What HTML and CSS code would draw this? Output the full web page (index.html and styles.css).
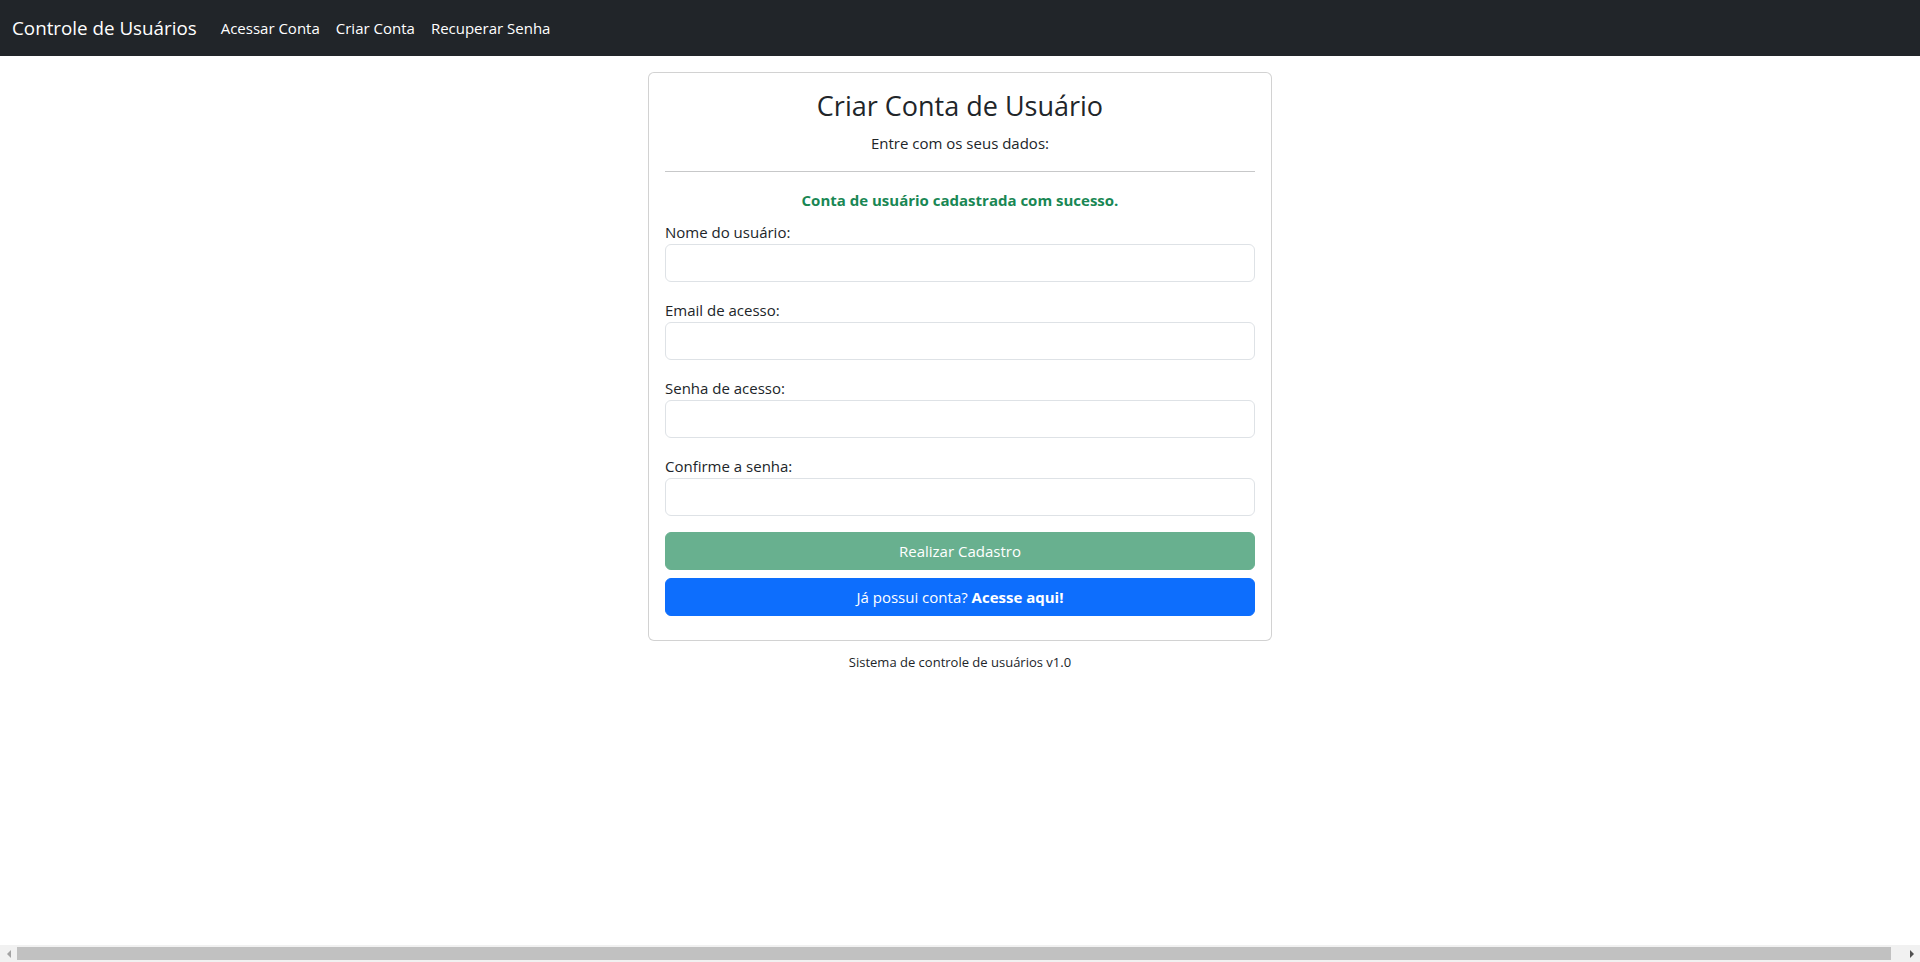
FILE: index.html
```html
<!DOCTYPE html>
<html lang="pt-br">
<head>
<meta charset="utf-8">
<title>Controle de Usuários</title>
<link rel="stylesheet" href="styles.css">
</head>
<body>
<nav class="navbar">
  <div class="navbar-inner">
    <a class="brand" href="#">Controle de Usuários</a>
    <ul class="nav-links">
      <li><a href="#">Acessar Conta</a></li>
      <li><a href="#">Criar Conta</a></li>
      <li><a href="#">Recuperar Senha</a></li>
    </ul>
  </div>
</nav>
<div class="row">
  <div class="col">
    <div class="card">
      <div class="card-body">
        <h3 class="title">Criar Conta de Usuário</h3>
        <p class="subtitle">Entre com os seus dados:</p>
        <hr class="divider">
        <p class="success">Conta de usuário cadastrada com sucesso.</p>
        <form class="form">
          <div class="field">
            <label for="nome">Nome do usuário:</label>
            <input id="nome" type="text" class="input">
          </div>
          <div class="field">
            <label for="email">Email de acesso:</label>
            <input id="email" type="email" class="input">
          </div>
          <div class="field">
            <label for="senha">Senha de acesso:</label>
            <input id="senha" type="password" class="input">
          </div>
          <div class="field">
            <label for="senha2">Confirme a senha:</label>
            <input id="senha2" type="password" class="input">
          </div>
          <div class="btn-wrap">
            <button type="button" class="btn btn-success" disabled>Realizar Cadastro</button>
          </div>
          <div class="btn-wrap">
            <a href="#" class="btn btn-primary">Já possui conta? <strong>Acesse aqui!</strong></a>
          </div>
        </form>
      </div>
    </div>
    <div class="footer"><small>Sistema de controle de usuários v1.0</small></div>
  </div>
</div>
<div class="hscroll" aria-hidden="true">
  <span class="hscroll-btn"><span class="arrow arrow-left"></span></span>
  <span class="hscroll-track"><span class="hscroll-thumb"></span></span>
  <span class="hscroll-btn"><span class="arrow arrow-right"></span></span>
</div>
</body>
</html>
```

FILE: styles.css
```css
* { box-sizing: border-box; }

html, body {
  margin: 0;
  padding: 0;
}

body {
  font-family: "Open Sans", "Noto Sans", sans-serif;
  font-size: 15px;
  line-height: 24px;
  color: #212529;
  background: #fff;
}

a { text-decoration: none; }

.navbar {
  background: #212529;
  padding: 8px 0;
}

.navbar-inner {
  display: flex;
  align-items: center;
  padding: 0 12px;
}

.brand {
  color: #fff;
  font-size: 18.8px;
  line-height: 30px;
  padding: 5px 0;
  margin-right: 16px;
}

.nav-links {
  display: flex;
  list-style: none;
  margin: 0;
  padding: 0;
}

.nav-links a {
  display: block;
  color: #fff;
  padding: 8px 8px;
  line-height: 24px;
}

.row {
  display: flex;
  margin: 0 -12px;
}

.col {
  width: 33.333333%;
  margin-left: 33.333333%;
  padding: 0 12px;
}

.card {
  margin-top: 16px;
  border: 1px solid rgba(0, 0, 0, 0.175);
  border-radius: 6px;
  background: #fff;
}

.card-body {
  padding: 16px;
}

.title {
  margin: 0 0 8px;
  text-align: center;
  font-size: 27px;
  line-height: 33.6px;
  font-weight: 500;
}

.subtitle {
  margin: 0 0 16px;
  text-align: center;
}

.divider {
  margin: 16px 0;
  border: 0;
  border-top: 1px solid #212529;
  opacity: 0.25;
}

.success {
  margin: 0 0 8px;
  text-align: center;
  color: #198754;
  font-weight: 700;
}

.form {
  margin: 0;
}

.field {
  margin-bottom: 16px;
}

.field label {
  display: inline-block;
}

.input {
  display: block;
  width: 100%;
  height: 38px;
  padding: 6px 12px;
  font: inherit;
  color: #212529;
  background: #fff;
  border: 1px solid #dee2e6;
  border-radius: 6px;
  outline: none;
}

.btn-wrap {
  display: grid;
  margin-bottom: 8px;
}

.btn {
  display: block;
  height: 38px;
  padding: 6px 12px;
  font: inherit;
  text-align: center;
  color: #fff;
  border: 1px solid transparent;
  border-radius: 6px;
}

.btn-success {
  background: #198754;
  border-color: #198754;
  opacity: 0.65;
}

.btn-primary {
  background: #0d6efd;
  border-color: #0d6efd;
}

.btn-primary strong {
  font-weight: 700;
}

.footer {
  margin-top: 8px;
  text-align: center;
}

.footer small {
  font-size: 13px;
}

/* imitation of the browser's horizontal scrollbar (overlay) */
.hscroll {
  position: fixed;
  left: 0;
  right: 0;
  bottom: 0;
  height: 17px;
  display: flex;
  background: #f1f1f1;
}

.hscroll-btn {
  width: 17px;
  flex: 0 0 17px;
  display: flex;
  align-items: center;
  justify-content: center;
}

.hscroll-track {
  flex: 1;
  padding: 2px 12px 2px 0;
  display: flex;
}

.hscroll-thumb {
  flex: 1;
  background: #c1c1c1;
}

.arrow {
  width: 0;
  height: 0;
  border-top: 4px solid transparent;
  border-bottom: 4px solid transparent;
}

.arrow-left {
  border-right: 4px solid #a3a3a3;
}

.arrow-right {
  border-left: 4px solid #505050;
}
```
